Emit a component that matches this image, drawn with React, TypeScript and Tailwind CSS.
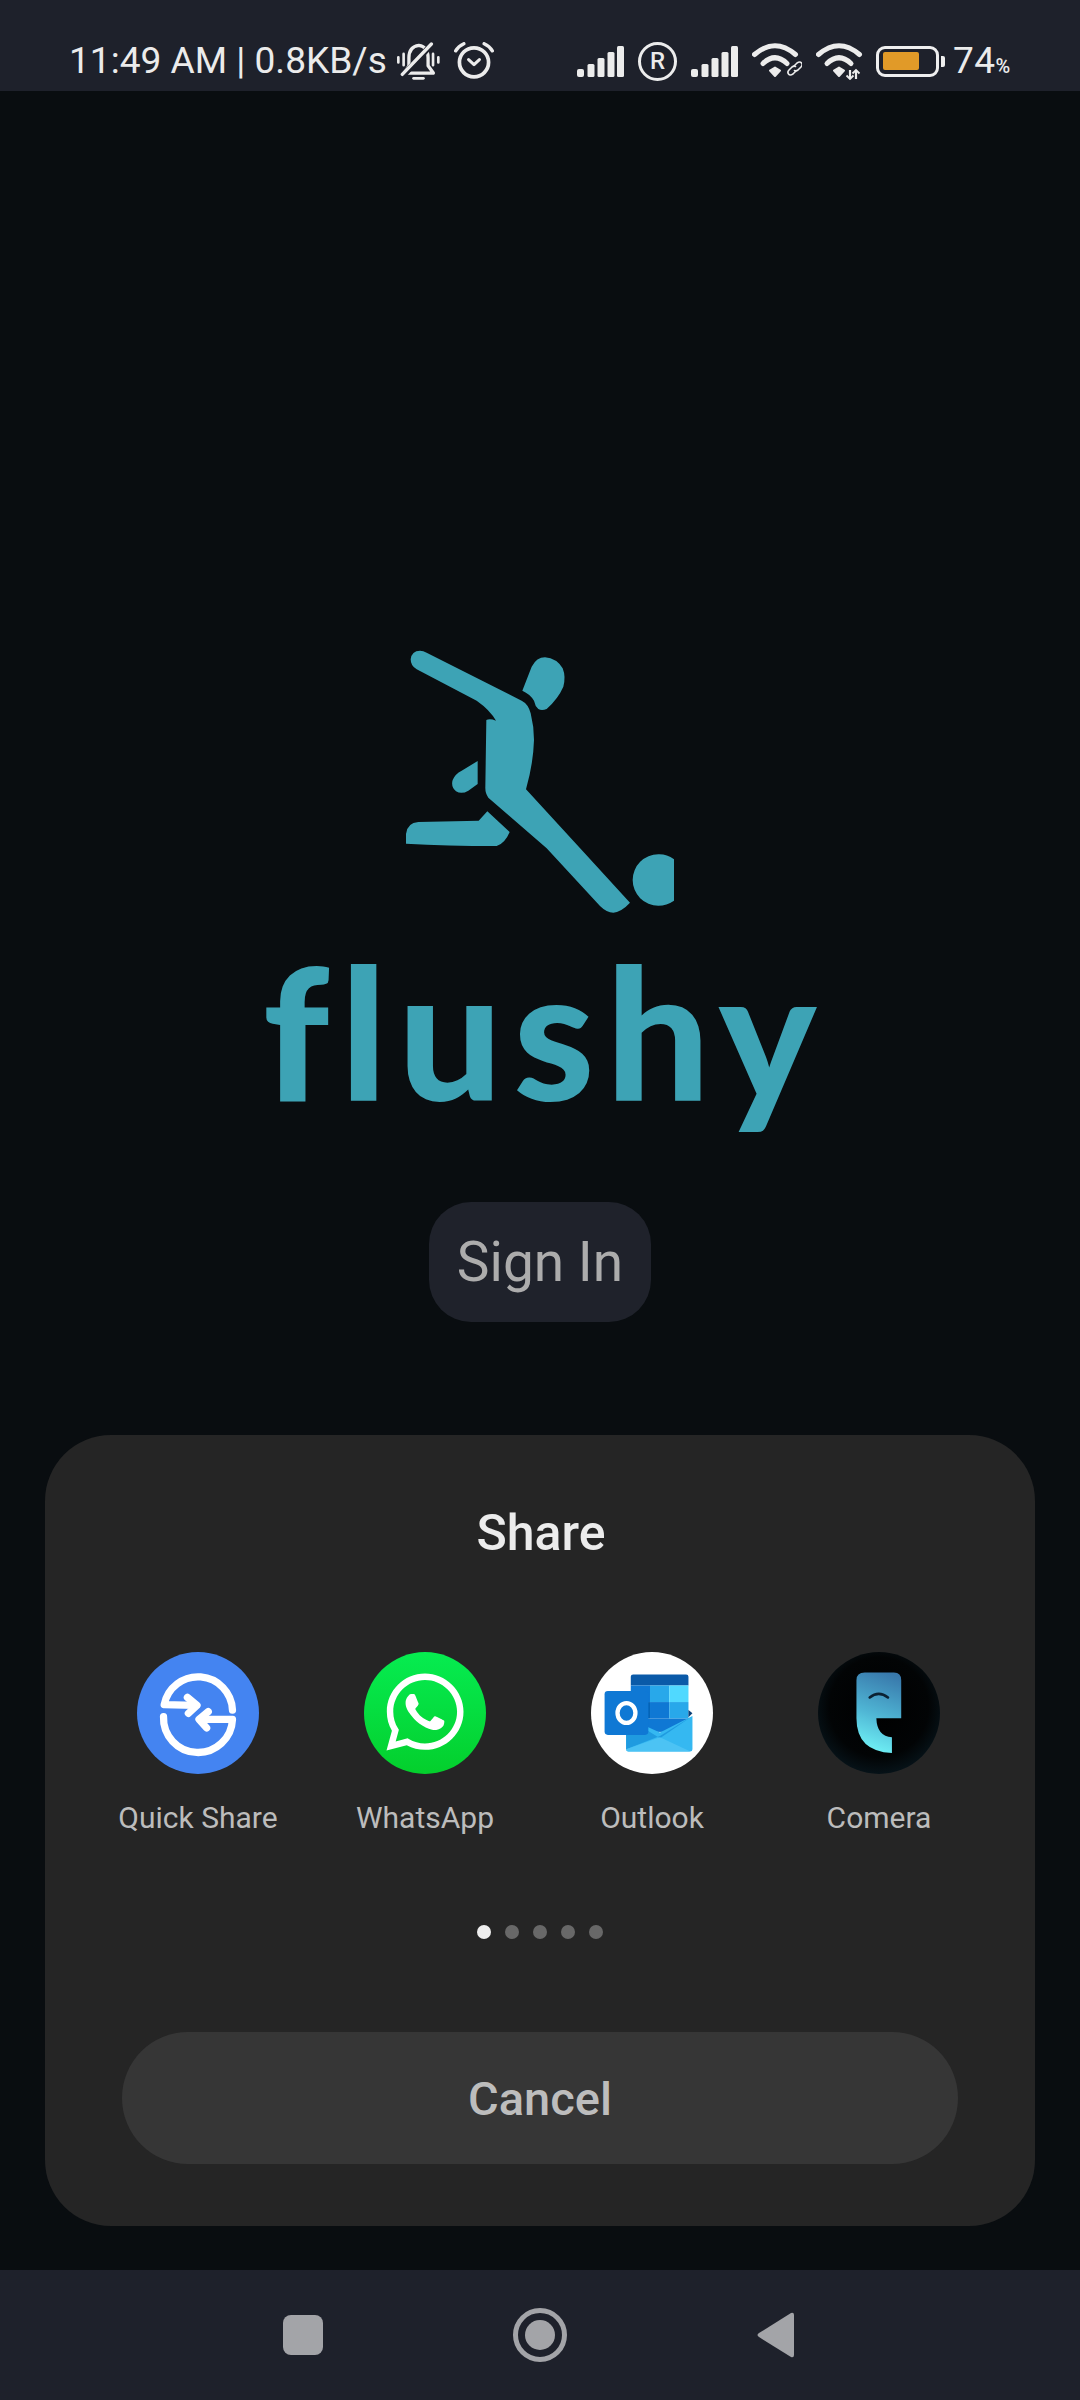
import { FaWhatsapp } from "react-icons/fa";

const roboto = "font-['Roboto','Liberation_Sans',sans-serif]";

function Signal() {
	return (
		<svg width="47" height="32" viewBox="0 0 47 32" fill="#ececec">
			<rect x="0" y="24" width="7" height="8" rx="2" />
			<rect x="10.5" y="19" width="7" height="13" rx="1.5" />
			<rect x="20.5" y="13" width="7" height="19" rx="1.5" />
			<rect x="30.5" y="7" width="7" height="25" rx="1.5" />
			<rect x="40" y="1" width="7" height="31" rx="1.5" />
		</svg>
	);
}

function Wifi({ badge }: { badge: "link" | "arrows" }) {
	return (
		<svg width="50" height="38" viewBox="0 0 50 38" fill="none" stroke="#ececec">
			<path d="M2.5 12.5 Q23 -5 43.5 12.5" strokeWidth="5" strokeLinecap="round" />
			<path d="M11 21.5 Q23 10 35 21.5" strokeWidth="5" strokeLinecap="round" />
			<path d="M18 28.5 L23 25.5 L28 28.5 L23 34 Z" fill="#ececec" strokeWidth="2" strokeLinejoin="round" />
			{badge === "link" ? (
				<g strokeWidth="1.6" strokeLinecap="round">
					<path d="M42 24 l3 -3 q3 -2 4.5 0 q1.5 2 -0.5 4 l-3 3 q-2 1.5 -3.5 0.5" />
					<path d="M44 29 l-3 3 q-3 2 -4.5 0 q-1.5 -2 0.5 -4 l3 -3 q2 -1.5 3.5 -0.5" />
				</g>
			) : (
				<g strokeWidth="2.2">
					<path d="M34 28 V37" />
					<path d="M30.5 33.5 L34 37 L37.500 33.5" strokeWidth="1.8" />
					<path d="M40 28 V37" />
					<path d="M36.500 31.500 L40 28 L43.500 31.500" strokeWidth="1.8" />
				</g>
			)}
		</svg>
	);
}

function BellOff() {
	return (
		<svg width="45" height="39" viewBox="1145 120 132 118" fill="none" stroke="#ececec" strokeLinecap="round">
			<path d="M1168 214 L1182 192 V168 Q1182 134 1212 130 Q1240 134 1240 168 V192 L1256 214 Z" strokeWidth="10" strokeLinejoin="round" />
			<path d="M1162 224 L1254 124" stroke="#1e212b" strokeWidth="18" />
			<path d="M1162 218 L1250 126" strokeWidth="10" />
			<path d="M1196 230 H1226" strokeWidth="8" />
			<path d="M1150 166 V182 M1166 156 V190 M1255 156 V190 M1271 166 V182" strokeWidth="8" />
		</svg>
	);
}

function Alarm() {
	return (
		<svg width="40" height="38" viewBox="1316 120 118 112" fill="none" stroke="#ececec" strokeLinecap="round">
			<circle cx="1375" cy="180" r="43" strokeWidth="11" />
			<path d="M1359 172 L1375 187 L1391 172" strokeWidth="9" strokeLinejoin="round" />
			<path d="M1321 146 Q1329 132 1345 125 M1405 125 Q1421 132 1429 146" strokeWidth="10" />
		</svg>
	);
}

function StatusBar() {
	return (
		<div className={`flex h-[91px] items-center bg-[#1e212b] pt-[31px] pl-[69px] text-[#ebebeb] ${roboto}`}>
			<span className="w-[327px] whitespace-nowrap text-[37.1px] leading-[42px]">11:49 AM | 0.8KB/s</span>
			<BellOff />
			<div className="ml-[13px]">
				<Alarm />
			</div>
			<div className="ml-[83px]">
				<Signal />
			</div>
			<div className="ml-[14px] flex h-[39px] w-[39px] items-center justify-center rounded-full border-[3.5px] border-[#ececec] text-[24px] leading-none font-medium">
				R
			</div>
			<div className="ml-[14px]">
				<Signal />
			</div>
			<div className="ml-[14px]">
				<Wifi badge="link" />
			</div>
			<div className="ml-[14px]">
				<Wifi badge="arrows" />
			</div>
			<div className="ml-[10px] flex h-[31px] w-[63px] items-center rounded-[9px] border-[3px] border-[#efefef] pl-[4px]">
				<div className="h-[18px] w-[36px] rounded-[2px] bg-[#e19a28]" />
			</div>
			<div className="ml-[2px] h-[11px] w-[4px] rounded-r-[2px] bg-[#efefef]" />
			<span className="ml-[8px] text-[37px] leading-[42px] tracking-[0.5px]">74</span>
			<span className="mt-[10px] text-[20px] leading-[24px] font-medium">%</span>
		</div>
	);
}

function Kicker() {
	return (
		<svg width="320" height="290" viewBox="0 0 960 870" fill="#3da3b5">
			<path d="M92 88 Q95 62 120 62 Q130 62 140 68 L425 212 Q445 222 452 250 Q462 290 462 330 Q460 400 438 478 L610 665 L750 818 Q725 845 700 848 Q680 848 660 828 L500 655 L325 503 Q315 490 316 470 L319 270 Q330 265 348 272 Q330 240 290 212 L110 118 Q92 108 92 88 Z" />
			<path d="M427 182 L455 110 Q470 82 495 82 Q530 85 548 115 Q558 140 550 170 Q535 205 500 237 Q485 243 475 237 Q465 228 462 212 Q450 192 427 182 Z" />
			<path d="M293 393 L293 462 L265 482 Q245 494 228 484 Q212 470 218 450 Q225 432 245 422 Z" />
			<path d="M78 641 L78 612 Q82 578 115 576 L296 572 L322 544 L389 606 Q375 640 350 648 Q200 648 78 641 Z" />
			<path d="M882 688 Q860 672 835 673 A77 77 0 0 0 835 827 Q860 827 882 812 Z" />
		</svg>
	);
}

function QuickShare() {
	return (
		<div className="flex h-[122px] w-[122px] items-center justify-center rounded-full bg-[#4484f1]">
			<svg width="122" height="122" viewBox="110 65 368 368" fill="none" stroke="#fff" strokeWidth="22" strokeLinecap="round" strokeLinejoin="round">
				<path d="M398 240 A104 104 0 0 0 192 224 L285 226" />
				<path d="M262 202 L291 226 L265 250" />
				<path d="M190 260 A104 104 0 0 0 398 268 L304 268" />
				<path d="M325 245 L297 268 L320 294" />
			</svg>
		</div>
	);
}

function WhatsApp() {
	return (
		<div className="flex h-[122px] w-[122px] items-center justify-center rounded-full bg-linear-to-b from-[#06ec50] to-[#04cf2c] pb-[2px] text-white">
			<FaWhatsapp size={88} />
		</div>
	);
}

function Outlook() {
	return (
		<div className="flex h-[122px] w-[122px] items-center justify-center rounded-full bg-white">
			<svg width="122" height="122" viewBox="92 65 368 368">
				<path d="M212 140 Q212 133 219 133 H379 Q386 133 386 140 V166 H212 Z" fill="#0a5aa8" />
				<rect x="212" y="166" width="58" height="50" fill="#0f78d4" />
				<rect x="270" y="166" width="58" height="50" fill="#28a8ea" />
				<rect x="328" y="166" width="58" height="50" fill="#50d9ff" />
				<rect x="212" y="216" width="58" height="50" fill="#0364b8" />
				<rect x="270" y="216" width="58" height="50" fill="#0f78d4" />
				<rect x="328" y="216" width="58" height="50" fill="#28a8ea" />
				<path d="M386 240 L398 250 L386 262 Z" fill="#0a3f78" />
				<rect x="212" y="266" width="174" height="40" fill="#0f78d4" />
				<path d="M198 262 L300 308 L398 258 V358 Q398 365 391 365 H205 Q198 365 198 358 Z" fill="#35b8f1" />
				<path d="M198 358 V262 L300 325 L398 258 L300 318 Z" fill="#1f9be0" />
				<path d="M300 322 L392 365 H205 Q198 365 198 358 Z" fill="#4cc3f4" />
				<rect x="133" y="183" width="132" height="132" rx="10" fill="#0f78d4" />
				<ellipse cx="199" cy="249" rx="27" ry="30" fill="none" stroke="#fff" strokeWidth="13" />
			</svg>
		</div>
	);
}

function Comera() {
	return (
		<div className="flex h-[122px] w-[122px] items-center justify-center">
			<svg width="122" height="122" viewBox="774 65 368 368">
				<defs>
					<radialGradient id="comeraBg" cx="50%" cy="45%" r="58%">
						<stop offset="0%" stopColor="#000" />
						<stop offset="70%" stopColor="#020405" />
						<stop offset="100%" stopColor="#07151c" />
					</radialGradient>
					<linearGradient id="comeraFace" x1="0.7" y1="0" x2="0.5" y2="1">
						<stop offset="0%" stopColor="#3878ab" />
						<stop offset="55%" stopColor="#4fb5d4" />
						<stop offset="100%" stopColor="#6ff0f5" />
					</linearGradient>
				</defs>
				<circle cx="958" cy="249" r="184" fill="url(#comeraBg)" />
				<path d="M890 150 Q890 127 915 127 L1003 127 Q1025 127 1025 150 L1025 265 L950 265 Q952 320 997 322 L997 370 Q890 365 890 265 Z" fill="url(#comeraFace)" />
				<path d="M930 202 Q957 180 985 202" fill="none" stroke="#0c2233" strokeWidth="8" strokeLinecap="round" />
			</svg>
		</div>
	);
}

const apps = [
	{ name: "Quick Share", icon: <QuickShare /> },
	{ name: "WhatsApp", icon: <WhatsApp /> },
	{ name: "Outlook", icon: <Outlook /> },
	{ name: "Comera", icon: <Comera /> },
];

function SharePanel() {
	return (
		<div className="mt-[113px] flex w-[990px] flex-col items-center rounded-[66px] bg-[#252525] pt-[68px] pb-[62px]">
			<h2 className="ml-[2px] text-[50px] leading-[60px] font-medium text-[#ececec]">Share</h2>
			<div className="mt-[89px] mr-[3px] grid w-[908px] grid-cols-4">
				{apps.map((app) => (
					<div key={app.name} className="flex flex-col items-center">
						{app.icon}
						<span className="mt-[24px] text-[30px] leading-[40px] text-[#bcbcbc]">{app.name}</span>
					</div>
				))}
			</div>
			<div className="mt-[87px] flex gap-[14px]">
				<div className="h-[14px] w-[14px] rounded-full bg-[#eeeeee]" />
				<div className="h-[14px] w-[14px] rounded-full bg-[#686868]" />
				<div className="h-[14px] w-[14px] rounded-full bg-[#686868]" />
				<div className="h-[14px] w-[14px] rounded-full bg-[#686868]" />
				<div className="h-[14px] w-[14px] rounded-full bg-[#686868]" />
			</div>
			<button className="mt-[93px] flex h-[132px] w-[836px] items-center justify-center rounded-full bg-[#363636] pt-[2px] text-[47px] font-medium text-[#bdbdbd]">
				Cancel
			</button>
		</div>
	);
}

function NavBar() {
	return (
		<div className="flex h-[130px] items-start bg-[#1e212b] pt-[38px] pl-[283px]">
			<div className="mt-[7px] h-[40px] w-[40px] rounded-[8px] bg-[#a3a4a8]" />
			<div className="ml-[190px] flex h-[54px] w-[54px] items-center justify-center rounded-full border-[5px] border-[#a3a4a8]">
				<div className="h-[30px] w-[30px] rounded-full bg-[#a3a4a8]" />
			</div>
			<svg className="mt-[4px] ml-[190px]" width="38" height="46" viewBox="0 0 38 46" fill="#a3a4a8">
				<path d="M2 21 L34 1 Q37 0 37 3 V43 Q37 46 34 45 L2 25 Q-1 23 2 21 Z" />
			</svg>
		</div>
	);
}

export default function App() {
	return (
		<div className={`flex h-[2400px] w-[1080px] flex-col bg-[#090d10] ${roboto}`}>
			<StatusBar />
			<main className="flex flex-1 flex-col items-center pt-[539px]">
				<Kicker />
				<div className="flex h-[282px] items-start pt-[10px]">
					<span className="pl-[10px] font-['Lato',sans-serif] text-[184px] leading-[200px] font-black tracking-[11px] text-[#3da3b5]">
						flushy
					</span>
				</div>
				<button className="flex h-[120px] w-[222px] items-center justify-center rounded-[42px] bg-[#1f222b] text-[55px] text-[#acacac]">
					Sign In
				</button>
				<SharePanel />
			</main>
			<NavBar />
		</div>
	);
}
